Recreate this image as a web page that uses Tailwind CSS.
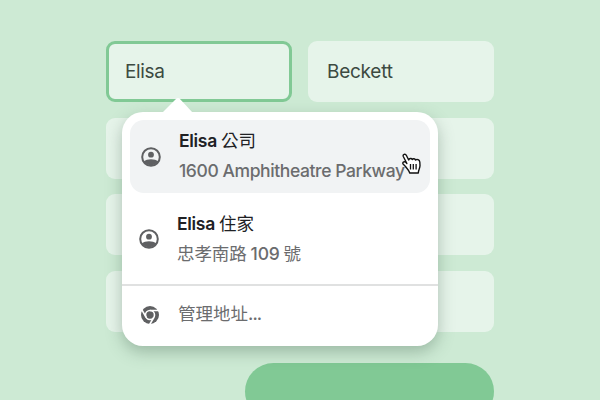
<!DOCTYPE html>
<html lang="zh-Hant">
<head>
<meta charset="utf-8">
<title>Autofill</title>
<script src="https://cdn.jsdelivr.net/npm/@tailwindcss/browser@4"></script>
</head>
<body class="relative h-[400px] w-[600px] overflow-hidden bg-[#cdead4] font-['Inter','Noto_Sans_CJK_TC',sans-serif]">
  <main class="ml-[106px] flex w-[388px] flex-col pt-[41px]">
    <div class="grid grid-cols-2 gap-x-4 gap-y-[15.5px]">
      <div class="flex h-[61px] items-center rounded-[9px] border-[3px] border-[#81c995] bg-[#e6f4ea] pl-4 pt-[2px] text-[19px] tracking-[-0.35px] text-[#3c4a41]">Elisa</div>
      <div class="flex h-[61px] items-center rounded-[9px] bg-[#e6f4ea] pl-[19px] pt-[2px] text-[19px] tracking-[-0.25px] text-[#3c4a41]">Beckett</div>
      <div class="col-span-2 h-[61px] rounded-[9px] bg-[#e6f4ea]"></div>
      <div class="col-span-2 h-[61px] rounded-[9px] bg-[#e6f4ea]"></div>
      <div class="col-span-2 h-[61px] rounded-[9px] bg-[#e6f4ea]"></div>
    </div>
    <div class="mt-[31px] h-[57px] w-[249px] self-end rounded-full bg-[#81c995]"></div>
  </main>

  <section class="absolute left-[122px] top-[112px] flex h-[234px] w-[316px] flex-col rounded-[21px] bg-white shadow-[0_6px_16px_rgba(60,90,70,0.34)]">
    <svg class="absolute left-[40px] top-[-15px]" width="32" height="16" viewBox="0 0 32 16"><path d="M0 16 14.500 1.600Q16 .2 17.500 1.600L31 16Z" fill="#fff"/></svg>
    <div class="mx-2 mt-2 flex h-[73px] items-center rounded-[14px] bg-[#f1f3f4] pl-[11px]">
      <svg width="20" height="20" viewBox="0 0 20 20"><circle cx="10" cy="10" r="8.800" fill="none" stroke="#5f6062" stroke-width="2"/><circle cx="10" cy="7.700" r="2.900" fill="#5f6062"/><path d="M2.800 14.500C6 11.600 14 11.600 17.200 14.500A9 9 0 0 1 2.800 14.500Z" fill="#5f6062"/></svg>
      <div class="ml-[18px] flex flex-col whitespace-nowrap pb-[2px] text-[17.5px] leading-[30px]">
        <div class="flex gap-1 text-[#202124]"><span class="font-semibold tracking-[-0.3px]">Elisa</span><span>公司</span></div>
        <div class="font-medium tracking-[-0.4px] text-[#6b6c6e]">1600 Amphitheatre Parkway</div>
      </div>
    </div>
    <div class="flex h-[91px] items-center pl-[17px]">
      <svg width="20" height="20" viewBox="0 0 20 20"><circle cx="10" cy="10" r="8.800" fill="none" stroke="#5f6062" stroke-width="2"/><circle cx="10" cy="7.700" r="2.900" fill="#5f6062"/><path d="M2.800 14.500C6 11.600 14 11.600 17.200 14.500A9 9 0 0 1 2.800 14.500Z" fill="#5f6062"/></svg>
      <div class="ml-[18px] flex flex-col whitespace-nowrap text-[17.5px] leading-[30px]">
        <div class="flex gap-1 text-[#202124]"><span class="font-semibold tracking-[-0.3px]">Elisa</span><span>住家</span></div>
        <div class="flex gap-1 text-[#6b6c6e]"><span class="tracking-[-0.1px]">忠孝南路</span><span class="font-medium tracking-[-0.2px]">109</span><span>號</span></div>
      </div>
    </div>
    <div class="h-[2px] bg-[#e0e1e1]"></div>
    <div class="flex h-[58px] items-center pl-[18px]">
      <svg width="20" height="20" viewBox="0 0 20 20"><circle cx="10" cy="10" r="9" fill="#5f6062"/><g fill="none" stroke="#fff" stroke-width="1.600"><circle cx="10" cy="10" r="4.500"/><path d="M10 5.500H19M6.100 12.250 1.600 4.450M13.900 12.250 9.400 20"/></g></svg>
      <div class="ml-[18px] pb-[2px] text-[17.5px] leading-[30px] text-[#6b6c6e]">管理地址<span class="font-medium tracking-[-0.9px]">...</span></div>
    </div>
  </section>

  <svg class="absolute left-[402px] top-[153px]" width="19" height="22" viewBox="0 0 19 22"><path d="M1.300 3.500C.5 1.300 3.300 .3 4.300 2.300L6.700 7C7.200 5.300 9.600 5 10.200 6.500 11 5.300 13 5.500 13.500 7 15 5.900 17.500 6.700 17.800 9L18 12.500C18 15.500 16.300 17 16.300 20H7.800C7 17 4.700 15.300 3.500 13.500L1.300 11.300C-.2 9.500 2 8 3.800 9.300L4.900 10.500Z" fill="#fff" stroke="#111" stroke-width="1.400" stroke-linejoin="round"/><path d="M8.500 11V16.500M11.300 11V16.500M14.100 11V16.500" stroke="#111" stroke-width="1.300"/></svg>
</body>
</html>
